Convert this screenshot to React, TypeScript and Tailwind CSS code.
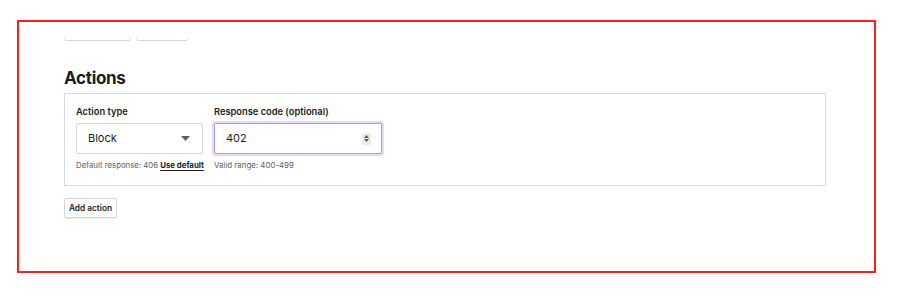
import React from "react";

export default function App() {
  return (
    <div
      className="w-[900px] h-[305px] bg-white pt-[20px] pl-[17px]"
      style={{ fontFamily: "Inter, 'Liberation Sans', sans-serif" }}
    >
      <div className="w-[859px] h-[253px] border-2 border-[#f5221a] overflow-hidden pl-[45px] pr-[48px] text-[#1b1e23]">
        {/* clipped buttons from previous section */}
        <div className="h-[19px] flex items-end gap-[5px]">
          <div className="w-[67px] h-[4px] shrink-0 border-x border-b border-x-[#e6e8ed] border-b-[#d3d7de] rounded-b-[2px]" />
          <div className="w-[52px] h-[4px] shrink-0 border-x border-b border-x-[#e6e8ed] border-b-[#d3d7de] rounded-b-[2px]" />
        </div>

        <h2 className="mt-[25px] mb-[3px] text-[17px] leading-[24px] font-bold tracking-[-0.3px]">
          Actions
        </h2>

        <div className="h-[93px] border border-[#d6dae2] pl-[11px] pt-[11px]">
          <div className="flex gap-[11px]">
            <div className="flex flex-col w-[127px]">
              <label className="text-[9.3px] leading-[14px] font-semibold">Action type</label>
              <div className="mt-[4px] h-[31px] border border-[#d3d6dc] rounded-[2px] flex items-center justify-between pl-[11px] pr-[12px]">
                <span className="text-[11px]">Block</span>
                <svg width="9" height="5" viewBox="0 0 9 5">
                  <path d="M0 0 L9 0 L4.5 5 Z" fill="#5c5f66" />
                </svg>
              </div>
              <div className="mt-[5px] text-[7.8px] leading-[12px] text-[#5d6068] whitespace-nowrap">
                Default response: 406{" "}
                <span className="font-bold text-[#1b1e23] underline underline-offset-[2px]">Use default</span>
              </div>
            </div>
            <div className="flex flex-col w-[168px]">
              <label className="text-[9.3px] leading-[14px] font-semibold whitespace-nowrap">
                Response code (optional)
              </label>
              <div className="mt-[4px] h-[31px] border border-[#ab97f4] rounded-[2px] shadow-[0_0_0_2px_#e2d9fd] flex items-center justify-between pl-[11px] pr-[10px]">
                <span className="text-[11px]">402</span>
                <div className="w-[9px] h-[12px] bg-[#ececee] flex flex-col items-center justify-center gap-[1px]">
                  <svg width="5" height="3" viewBox="0 0 5 3">
                    <path d="M0 3 L5 3 L2.5 0 Z" fill="#55585e" />
                  </svg>
                  <svg width="5" height="3" viewBox="0 0 5 3">
                    <path d="M0 0 L5 0 L2.5 3 Z" fill="#55585e" />
                  </svg>
                </div>
              </div>
              <div className="mt-[5px] text-[7.9px] leading-[12px] text-[#5d6068] whitespace-nowrap">
                Valid range: 400-499
              </div>
            </div>
          </div>
        </div>

        <button className="mt-[12px] w-[53px] h-[20px] border border-[#d3d6dc] rounded-[2px] text-[8.3px] font-semibold leading-none text-[#1b1e23] shadow-[0_1px_0_#eceef2] whitespace-nowrap">
          Add action
        </button>
      </div>
    </div>
  );
}
